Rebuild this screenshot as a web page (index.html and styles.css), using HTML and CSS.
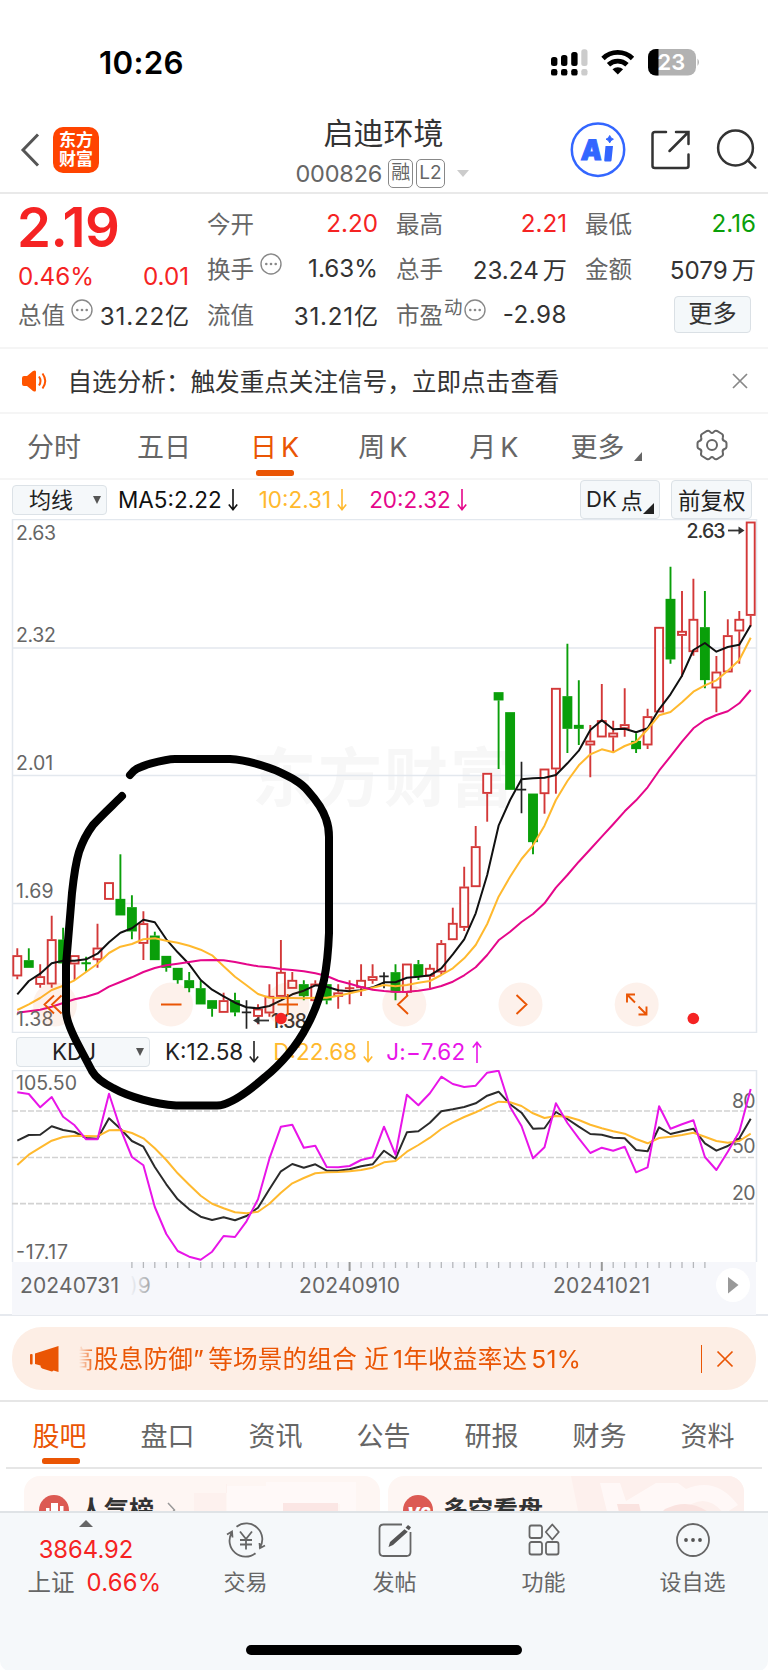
FILE: index.html
```html
<!DOCTYPE html>
<html lang="zh-CN">
<head>
<meta charset="utf-8">
<title>启迪环境 000826</title>
<link rel="stylesheet" href="styles.css">
</head>
<body>
<div class="phone">
  <div class="status">
    <span class="clock">10:26</span>
    <svg class="status-icons" width="152" height="30" viewBox="550 47 152 30">
      <g fill="#000"><rect x="551" y="57" width="6.4" height="9" rx="2.5"/><rect x="561" y="55" width="6.4" height="11" rx="2.5"/><rect x="571.2" y="52" width="6.4" height="14" rx="2.5"/><rect x="551" y="69" width="6.4" height="6.6" rx="2.2"/><rect x="561" y="69" width="6.4" height="6.6" rx="2.2"/><rect x="571.2" y="69" width="6.4" height="6.6" rx="2.2"/></g>
      <g fill="#ccc"><rect x="581.3" y="49.3" width="6.2" height="16.7" rx="2.5"/><rect x="581.3" y="69" width="6.2" height="6.6" rx="2.2"/></g>
      <path d="M603 58.500a21 21 0 0 1 29.500 0M608.500 64.700a13.500 13.500 0 0 1 18.500 0" fill="none" stroke="#000" stroke-width="4.800"/>
      <path d="M612.500 69.300a8 8 0 0 1 10.600 0l-5.300 5.300z"/>
      <rect x="648" y="49" width="48" height="26.500" rx="8" fill="#b2b2b2"/>
      <path d="M658.500 49v26.500H656a8 8 0 0 1-8-8V57a8 8 0 0 1 8-8z"/>
      <path d="M697.500 58.500q3 3.500 0 7.500z" fill="#b2b2b2"/>
      <text x="657.500" y="70.200" class="battery">23</text>
    </svg>
  </div>

  <header class="header">
    <div class="head-left">
      <svg width="22" height="36" viewBox="0 0 22 36"><path d="M19 2.500L4 18l15 15.500" fill="none" stroke="#555" stroke-width="3"/></svg>
      <div class="logo"><span>东方</span><span>财富</span></div>
    </div>
    <div class="head-title">
      <h1>启迪环境</h1>
      <div class="code"><span class="num">000826</span><span class="tag">融</span><span class="tag l2">L2</span><i class="caret"></i></div>
    </div>
    <div class="head-right">
      <svg width="56" height="56" viewBox="570 122 56 56"><circle cx="598" cy="149.700" r="26.200" fill="#fff" stroke="#3366ff" stroke-width="2.500"/><text x="0" y="0" transform="translate(580.500 160) skewX(-4)" class="ai" textLength="21" lengthAdjust="spacingAndGlyphs">A</text><path d="M605.500 146h7.500l-1.500 14.500q-.1 1-1.200 1h-5q-1.200 0-1.100-1.200z" fill="#3366ff"/><path d="M609.700 135.500q.8 2.900 3.700 3.700-2.900.8-3.700 3.700-.8-2.900-3.700-3.700 2.900-.8 3.700-3.700z" fill="#3366ff" stroke="#3366ff"/></svg>
      <svg width="42" height="42" viewBox="650 129 42 42" fill="none" stroke="#333" stroke-width="2.500" stroke-linecap="round"><path d="M666 132h-11q-2.500 0-2.500 2.500v31.500q0 2 2.500 2h31q2.500 0 2.500-2v-11.500M676 132H688.500v12M688 132.500L669.500 151"/></svg>
      <svg width="41" height="42" viewBox="716 129 41 42" fill="none" stroke="#333" stroke-width="2.500" stroke-linecap="round"><circle cx="735.500" cy="148" r="17.400"/><path d="M748 160.500l7.300 7.200"/></svg>
    </div>
  </header>

  <section class="quote">
    <div class="col first">
      <div class="price red">2.19</div>
      <div class="pair change red"><span>0.46%</span><span>0.01</span></div>
      <div class="pair"><span class="lab">总值<svg class="dots" viewBox="0 0 24 24"><use href="#more"/></svg></span><span class="wide">31.22亿</span></div>
    </div>
    <div class="col">
      <div class="pair top"><span class="lab">今开</span><span class="red">2.20</span></div>
      <div class="pair"><span class="lab">换手<svg class="dots" viewBox="0 0 24 24"><use href="#more"/></svg></span><span>1.63%</span></div>
      <div class="pair"><span class="lab">流值</span><span class="wide">31.21亿</span></div>
    </div>
    <div class="col">
      <div class="pair top"><span class="lab">最高</span><span class="red">2.21</span></div>
      <div class="pair"><span class="lab">总手</span><span>23.24<b class="thin"></b>万</span></div>
      <div class="pair"><span class="lab">市盈<small>动</small><svg class="dots tight" viewBox="0 0 24 24"><use href="#more"/></svg></span><span class="neg">-2.98</span></div>
    </div>
    <div class="col">
      <div class="pair top"><span class="lab">最低</span><span class="green">2.16</span></div>
      <div class="pair"><span class="lab">金额</span><span>5079<b class="thin"></b>万</span></div>
      <div class="pair end"><span class="more-btn">更多</span></div>
    </div>
  </section>
  <svg class="defs" width="0" height="0"><symbol id="more" viewBox="0 0 24 24"><circle cx="12" cy="12" r="10" fill="none" stroke="#888" stroke-width="1.400"/><g fill="#888"><circle cx="7.300" cy="12" r="1.300"/><circle cx="12" cy="12" r="1.300"/><circle cx="16.700" cy="12" r="1.300"/></g></symbol></svg>

  <div class="notice">
    <svg width="26" height="22" viewBox="0 0 26 22"><path d="M0 8q0-2 2-2h3l6-5q3-1.500 3 1v18q0 2.500-3 1L5 16H2q-2 0-2-2z" fill="#ff5500"/><path d="M17 6.500q3 4.500 0 9M20.500 3.500q5.500 7.500 0 15" fill="none" stroke="#ff5500" stroke-width="2"/></svg>
    <span>自选分析：触发重点关注信号，立即点击查看</span>
    <svg width="16" height="16" viewBox="0 0 16 16"><path d="M1 1l14 14M15 1L1 15" stroke="#888" stroke-width="1.700"/></svg>
  </div>

  <nav class="periods">
    <span>分时</span><span>五日</span><span class="on">日<b class="thin"></b>K</span><span>周<b class="thin"></b>K</span><span>月<b class="thin"></b>K</span><span class="more-tab">更多<i class="corner"></i></span>
    <svg width="34" height="34" viewBox="-17 -17 34 34" fill="none" stroke="#666" stroke-width="2"><path d="M-5-14Q-3-15-1.500-12.800Q0-11 1.500-12.800Q3-15 5-14L10-11Q11.500-10 10.800-7.500Q10-5 12.500-4Q14.500-3.500 14.500-1.500V1.500Q14.500 3.500 12.500 4Q10 5 10.800 7.500Q11.500 10 10 11L5 14Q3 15 1.500 12.800Q0 11-1.500 12.800Q-3 15-5 14L-10 11Q-11.500 10-10.800 7.500Q-10 5-12.500 4Q-14.500 3.500-14.500 1.500V-1.500Q-14.500-3.500-12.500-4Q-10-5-10.800-7.500Q-11.500-10-10-11Z"/><circle r="5"/></svg>
  </nav>

  <div class="charts">
    <div class="ma-row">
      <span class="box avg">均线<i class="down"></i></span>
      <span class="val ma5">MA5:2.22<svg class="arr" viewBox="0 0 10 22"><use href="#dn"/></svg></span>
      <span class="val ma10">10:2.31<svg class="arr" viewBox="0 0 10 22"><use href="#dn"/></svg></span>
      <span class="val ma20">20:2.32<svg class="arr" viewBox="0 0 10 22"><use href="#dn"/></svg></span>
      <span class="box dk">DK<b class="thin"></b>点<i class="corner dark"></i></span>
      <span class="box adj">前复权</span>
    </div>
    <svg class="defs" width="0" height="0"><symbol id="dn" viewBox="0 0 10 22"><path d="M5 0v20.500M.8 15.500L5 20.700l4.200-5.200" fill="none" stroke="currentColor" stroke-width="1.600"/></symbol></svg>

    <svg class="kline" width="768" height="514" viewBox="0 519 768 514">
      <text class="watermark" x="252" y="801" textLength="262">东方财富</text>
      <path class="grid" d="M12.500 519.500H756.500V1032.500H12.500ZM12 648H756M12 775.500H756M12 903.500H756"/>
      <g id="candles"></g>
      <g id="averages"></g>
      <g class="axis"><text x="16" y="540" textLength="40">2.63</text><text x="16" y="641.500" textLength="40">2.32</text><text x="16" y="769.500">2.01</text><text x="16" y="897.500" textLength="37.500">1.69</text><text x="16" y="1025.500" textLength="37.500">1.38</text></g>
      <text class="mark" x="686.500" y="537.500" textLength="39">2.63</text>
      <path d="M728 530.500h12" stroke="#333" stroke-width="1.800"/><path d="M738.500 526.500l6 4-6 4z" fill="#333"/>
      <text class="mark" x="271" y="1027.500" textLength="36">1.38</text>
      <path d="M269 1020.500h-12" stroke="#333" stroke-width="1.800"/><path d="M259.500 1016.500l-6.500 4 6.500 4z" fill="#333"/>
      <g class="buttons"><circle cx="55" cy="1004.500" r="22"/><circle cx="171" cy="1004.500" r="22"/><circle cx="287.500" cy="1004.500" r="22"/><circle cx="404.300" cy="1004.500" r="22"/><circle cx="520.500" cy="1004.500" r="22"/><circle cx="636.700" cy="1004.500" r="22"/></g>
      <path class="glyphs" d="M54 995.500l-9.500 9 9.500 9M61.500 995.500l-9.500 9 9.500 9M161 1004.500h20.500M277.500 1004.500h20.500M287.700 994v21M408 995l-10 9.500 10 9.500M516.500 995l10 9.500-10 9.500M627 1002.500v-8h8M627 994.500l8 8M646.500 1006.500v8h-8M646.500 1014.500l-8-8"/>
      <circle cx="281" cy="1018.500" r="5.800" fill="#f52323"/><circle cx="693.300" cy="1018.500" r="5.800" fill="#f52323"/>
    </svg>

    <div class="kdj-row">
      <span class="box kdj">KDJ<i class="down"></i></span>
      <span class="val k">K:12.58<svg class="arr" viewBox="0 0 10 22"><use href="#dn"/></svg></span>
      <span class="val d">D:22.68<svg class="arr" viewBox="0 0 10 22"><use href="#dn"/></svg></span>
      <span class="val j">J:−7.62<svg class="arr flip" viewBox="0 0 10 22"><use href="#dn"/></svg></span>
    </div>

    <svg class="osc" width="768" height="246" viewBox="0 1070 768 246">
      <defs><linearGradient id="fade"><stop offset="0" stop-color="#777" stop-opacity="0"/><stop offset="1" stop-color="#777" stop-opacity=".65"/></linearGradient></defs>
      <path class="grid" d="M12.500 1262V1070.500H756.500V1262"/>
      <path class="dash" d="M12 1111H756M12 1157.500H756M12 1203.700H756"/>
      <rect x="12" y="1262" width="744" height="53" fill="#f6f7fb"/>
      <g id="ticks"></g>
      <g class="axis"><text x="16" y="1089.500" textLength="61">105.50</text><text x="16" y="1258.500" textLength="52">-17.17</text><text x="732" y="1107.500" textLength="23.500">80</text><text x="732" y="1153" textLength="23.500">50</text><text x="732" y="1199.500" textLength="23.500">20</text></g>
      <g id="kdj"></g>
      <g class="dates"><text x="20" y="1292.500" textLength="99">20240731</text><text x="130" y="1292.500" fill="url(#fade)">)9</text><text x="299" y="1292.500" textLength="101">20240910</text><text x="553" y="1292.500" textLength="97">20241021</text></g>
      <circle cx="733" cy="1285" r="17" fill="#fff"/><path d="M728 1277l10.500 8-10.500 8.500z" fill="#999"/>
    </svg>

    <svg class="scribble" width="290" height="366" viewBox="54 749 290 366"><path d="M130 775C135 768 141 767 149 764C160 761 167 759 175 759L230 759C246 760 262 765 275 770C290 777 301 782 308 791C317 801 323 810 326 819Q329 827 329 837V933Q328 960 324 980Q318 1006 307 1026C297 1046 280 1065 265 1077C249 1091 231 1105 217 1105.500L176 1105.500C155 1104 129 1097 113 1088Q97 1080 92 1071L82 1052Q66 1023 66 1011V965L72 893Q75 865 79 852Q84 837 93 825C101 816 113 805 122 796"/></svg>
  </div>

  <div class="promo-wrap">
    <div class="promo">
      <svg width="32" height="26" viewBox="0 0 32 26" fill="#ea5504"><rect x="1" y="8" width="2.600" height="10.500" rx="1"/><path d="M6 7.500L29.500 0v26l-5-1.600q-1 1.500-3.300.7l-8-2.500q-2-.8-1.700-3L6 18z"/></svg>
      <span class="promo-text">高股息防御”<b class="thin"></b>等场景的组合 近<b class="thin"></b>1年收益率达<b class="thin"></b>51%</span>
      <i class="bar"></i>
      <svg width="18" height="18" viewBox="0 0 18 18"><path d="M1.500 1.500l15 15M16.500 1.500l-15 15" stroke="#ea5504" stroke-width="1.700"/></svg>
    </div>
  </div>

  <nav class="sections"><span class="on">股吧</span><span>盘口</span><span>资讯</span><span>公告</span><span>研报</span><span>财务</span><span>资料</span></nav>

  <div class="cards">
    <div class="card">
      <svg class="deco" width="356" height="60" viewBox="0 0 356 60"><path d="M170 60V17h33V8h-1v52z" fill="#fdf1ee"/><path d="M203 60V10h39v-4h90v54h-16V28h-57v32z" fill="#fff9f8"/><path d="M259 27h55v20h-55z" fill="#fbe6e4"/></svg>
      <svg class="badge" width="30" height="30" viewBox="0 0 30 30"><circle cx="15" cy="15" r="15" fill="#dc5a53"/><path d="M7 25V13h3.500v12zM12 25V8h7v17zM21 25V11h3.500v14z" fill="#fff"/></svg>
      <span>人气榜</span>
      <svg class="chev" width="9" height="16" viewBox="0 0 9 16"><path d="M1 1l6.500 7L1 15" fill="none" stroke="#999" stroke-width="1.500"/></svg>
    </div>
    <div class="card">
      <svg class="deco" width="356" height="60" viewBox="0 0 356 60"><path d="M183 0h173v60H195z" fill="#fdf0ed"/><path d="M212 7h20l6 18 30-18h22l8 6q30-13 52 16l-14 9q-20-26-45 0L250 60h-25z" fill="#fff8f7"/><path d="M229 28h22l6 25 20-20q30-15 55 14l-20 14h-75z" fill="#fae3e0"/></svg>
      <svg class="badge" width="30" height="30" viewBox="0 0 30 30"><circle cx="15" cy="15" r="15" fill="#dc5a53"/><text x="4" y="24" class="vs">VS</text></svg>
      <span>多空看盘</span>
    </div>
  </div>

  <footer class="bottom">
    <div class="tabs">
      <div class="index"><i class="tri"></i><span class="red">3864.92</span><div><span class="gray">上证</span><span class="red">0.66%</span></div></div>
      <div class="tab"><svg width="40" height="36" viewBox="-20 -18 40 36"><path d="M-9.500-13.200A16 16 0 0 1 13.500 8.500M9.500 13.200A16 16 0 0 1-14.500-7M-19-5.500l5-3 .5 6M19 5.500l-5 2.500-.5-5M-6-8.500l6 7.500 6-7.500M0-1v10.500M-6 0H6M-6 4.500H6"/></svg><span>交易</span></div>
      <div class="tab"><svg width="40" height="36" viewBox="-20 -18 40 36"><path d="M7-15.500H-11.500q-4 0-4 4v23.500q0 4 4 4h23q4 0 4-4V-8"/><path class="solid" d="M13-15l3 2.300-2 3-3.500-2.500zM9.500-10.700l3.300 2.500L-2 5-6.500 7-5 2z"/></svg><span>发帖</span></div>
      <div class="tab"><svg width="40" height="36" viewBox="-20 -18 40 36"><rect x="-14.500" y="-14.500" width="12.500" height="12.500" rx="2"/><rect x="-14.500" y="2" width="12.500" height="12.500" rx="2"/><rect x="2" y="2" width="12.500" height="12.500" rx="2"/><path d="M8.300-15.500l6.500 7.500-6.500 7.500-6.500-7.500z" stroke-linejoin="round"/></svg><span>功能</span></div>
      <div class="tab"><svg width="40" height="36" viewBox="-20 -18 40 36"><circle r="16"/><g class="solid"><circle cx="-7" r="1.900"/><circle r="1.900"/><circle cx="7" r="1.900"/></g></svg><span>设自选</span></div>
    </div>
    <div class="home"></div>
  </footer>
</div>
<script src="chart.js"></script>
</body>
</html>
```
FILE: styles.css
```css
* { box-sizing: border-box; }
body { margin: 0; background: #fff; font-family: Inter, "Noto Sans CJK SC", sans-serif; color: #333; }
.phone { width: 768px; height: 1670px; overflow: hidden; display: flex; flex-direction: column; }
.phone > * { flex: none; }
svg { display: block; flex: none; }
.defs { position: absolute; }
.red { color: #f52323; }
.green { color: #0a9f0a; }
.thin { display: inline-block; width: 4px; }

.status { height: 107px; display: flex; align-items: flex-start; justify-content: space-between; padding: 43px 66px 0 99px; }
.clock { font-size: 31.300px; line-height: 40px; font-weight: 600; color: #000; letter-spacing: .3px; }
.status-icons { margin-top: 4px; }
.battery { font: 600 22px Inter, sans-serif; fill: #fff; }

.header { height: 87px; border-bottom: 2px solid #e9e9e9; display: grid; grid-template-columns: 1fr auto 1fr; }
.head-left { display: flex; align-items: center; gap: 12px; padding: 0 0 0 19px; }
.logo { width: 46px; height: 46px; border-radius: 10px; background: #ff4400; color: #fff; display: flex; flex-direction: column; align-items: center; justify-content: center; font-weight: 700; font-size: 17px; line-height: 19px; }
.head-title { display: flex; flex-direction: column; align-items: center; margin-left: -4px; }
h1 { margin: 7px 0 0 3px; font-weight: 400; font-size: 30px; line-height: 39px; }
.code { display: flex; align-items: center; height: 30px; margin-top: 5px; font-size: 23.500px; color: #666; }
.code .num { letter-spacing: -.2px; margin-right: 6px; }
.tag { height: 29px; border: 1.500px solid #888; border-radius: 5px; font-size: 19px; line-height: 26px; padding: 0 2px; margin-right: 3px; }
.caret { border: 6.500px solid transparent; border-top: 7px solid #ccc; border-bottom: 0; margin-left: 9px; }
.head-right { display: flex; align-items: center; justify-content: flex-end; gap: 24px; padding: 0 11px 0 0; }
.ai { font: 900 28px Inter, sans-serif; fill: #3366ff; stroke: #3366ff; stroke-width: 1; }

.quote { height: 153px; display: grid; grid-template-columns: repeat(4, 171px); column-gap: 18px; padding: 5px 12px 0 18px; font-size: 24.200px; }
.pair { height: 46px; display: flex; align-items: center; justify-content: space-between; white-space: nowrap; }
.pair.top { padding-top: 2px; }
.price { height: 60px; line-height: 56px; font-size: 54.500px; font-weight: 600; letter-spacing: -.5px; margin: 0 0 2px -1px; }
.pair.change { height: 30px; margin-top: 2px; }
.wide { letter-spacing: .8px; margin-right: -1px; }
.neg { letter-spacing: .5px; }
.lab { color: #666; display: flex; align-items: center; font-size: 23.500px; }
.lab small { font-size: 18.500px; margin: -16px -1px 0 1px; }
.dots { width: 24px; height: 24px; margin: -9px 0 0 5px; }
.dots.tight { margin-left: 1px; }
.end { justify-content: flex-end; padding-right: 5px; }
.more-btn { width: 77px; height: 37px; background: #f4f8fa; border: 1.500px solid #dae0e5; border-radius: 4px; text-align: center; line-height: 34px; }

.notice { height: 67px; border-top: 2px solid #f5f5f5; border-bottom: 2px solid #f5f5f5; display: flex; align-items: center; padding: 0 20px 0 22px; font-size: 24.600px; }
.notice span { flex: 1; margin-left: 19.500px; padding-bottom: 2px; }

.periods { height: 66px; border-bottom: 2px solid #f5f5f5; display: flex; align-items: center; font-size: 27px; color: #666; padding: 0 0 2px 27px; }
.periods span { position: relative; margin-right: 56px; white-space: nowrap; }
.periods span:nth-child(2) { margin-right: 59px; }
.periods span:nth-child(3) { margin-right: 59px; }
.periods span:nth-child(4) { margin-right: 62px; }
.periods span:nth-child(5) { margin-right: 52px; }
.periods .more-tab { margin-right: 71px; }
.on { color: #ea5504; }
.on::after { content: ""; position: absolute; left: 50%; margin-left: -19px; bottom: -11px; width: 38px; height: 6px; border-radius: 2.500px; background: #ea5504; }
.corner { position: absolute; right: -18px; bottom: 4px; border-left: 8px solid transparent; border-bottom: 9px solid #666; }

.charts { position: relative; height: 836px; border-bottom: 2px solid #e6e9ee; }
.ma-row, .kdj-row { display: flex; align-items: center; font-size: 22.500px; color: #222; }
.ma-row { height: 39px; padding: 0 16px 0 12px; }
.kdj-row { height: 37px; padding-left: 16px; font-size: 22.500px; }
.box { position: relative; display: flex; align-items: center; background: #f5f8fa; border: 1.500px solid #dce2e7; border-radius: 4px; }
.avg { width: 95px; height: 30px; padding: 0 0 3px 16px; font-size: 22px; }
.down { position: absolute; right: 5px; top: 10px; border: 4.500px solid transparent; border-top: 8px solid #555; border-bottom: 0; }
.dk { width: 80px; height: 39px; padding: 0 0 2px 5px; margin-left: auto; font-size: 22px; }
.adj { width: 81px; height: 39px; padding: 0 0 2px 6px; margin-left: 11px; font-size: 22.500px; white-space: nowrap; }
.corner.dark { right: 5px; bottom: 4px; border-left: 11px solid transparent; border-bottom: 11px solid #222; }
.kdj { width: 134px; height: 30px; padding-left: 35px; }
.kdj .down { right: 5px; }
.val { display: flex; align-items: center; white-space: nowrap; }
.arr { width: 10px; height: 22px; margin-left: 6px; }
.arr.flip { transform: rotate(180deg); }
.ma5 { margin-left: 11px; color: #111; }
.ma10 { margin-left: 21px; color: #ffb92e; }
.ma20 { margin-left: 22px; color: #e5078a; }
.k { margin-left: 15px; }
.d { margin-left: 14px; color: #ffb92e; }
.j { margin-left: 13px; color: #e815e8; letter-spacing: .3px; }

.grid { fill: none; stroke: #e3e8ee; stroke-width: 1.500; }
.dash { fill: none; stroke: #d2d2d2; stroke-width: 1.700; stroke-dasharray: 6 2; }
.axis { font-size: 19.500px; fill: #666; }
.mark { font-size: 19.500px; font-weight: 500; fill: #333; }
.dates { font-size: 21px; fill: #666; }
.watermark { font: 700 64px "Noto Sans CJK SC", sans-serif; fill: #f7f7f7; }
.buttons { fill: #ee6020; fill-opacity: .09; }
.glyphs { fill: none; stroke: #ea5504; stroke-width: 1.900; }
.line { fill: none; stroke-width: 2; stroke-linejoin: round; }
.rise { stroke: #d33838; fill: #fff; stroke-width: 1.900; }
.fall { stroke: #0a9f0a; fill: #0a9f0a; stroke-width: 1.900; }
.flat { stroke: #222; fill: none; stroke-width: 1.700; }
.tick { stroke: #b5b7bb; stroke-width: 1.300; }
.tick.major { stroke: #999; stroke-width: 2; }
.scribble { position: absolute; left: 54px; top: 269px; fill: none; stroke: #000; stroke-width: 8; stroke-linecap: round; stroke-linejoin: round; }

.promo-wrap { height: 86px; padding: 11px 12px 0; border-bottom: 2px solid #e6e6e6; }
.promo { height: 63px; border-radius: 30px; background: #fdeee5; display: flex; align-items: center; padding: 0 22px 0 17px; color: #ea5504; }
.promo-text { flex: 1; height: 40px; line-height: 41px; font-size: 24.600px; letter-spacing: .22px; margin-left: 18px; text-indent: -10px; overflow: hidden; white-space: nowrap; -webkit-mask-image: linear-gradient(90deg, transparent 0, #000 16px); mask-image: linear-gradient(90deg, transparent 0, #000 16px); }
.bar { width: 1.500px; height: 28px; background: #ea5504; margin-right: 14px; }

.sections { height: 67px; margin: 0 6px; border-bottom: 2px solid #e6e6e6; display: grid; grid-template-columns: repeat(7, 108px); font-size: 27px; color: #666; }
.sections span { position: relative; left: -.5px; line-height: 70px; text-align: center; }
.sections .on { color: #ea5504; }
.sections .on::after { bottom: 8px; margin-left: -18px; }

.cards { height: 42px; display: grid; grid-template-columns: 356px 356px; gap: 8px; padding: 7px 24px 0; overflow: hidden; }
.card { position: relative; height: 70px; border-radius: 16px 16px 0 0; background: #fef6f3; overflow: hidden; display: flex; align-items: flex-start; padding: 19px 0 0 15px; font-size: 25px; line-height: 31px; font-weight: 700; color: #333; }
.card span { position: relative; margin-left: 10px; }
.badge, .chev { position: relative; }
.chev { margin: 7px 0 0 13px; }
.deco { position: absolute; left: 0; top: 0; }
.vs { font: italic 900 16px Inter, sans-serif; fill: #fff; }

.bottom { height: 160px; border-top: 2px solid #dfe3e6; background: #f5f8fa; border-radius: 0 0 10px 10px; display: flex; flex-direction: column; justify-content: space-between; align-items: center; padding-bottom: 16px; }
.tabs { display: grid; grid-template-columns: 171px repeat(4, 149px); width: 768px; font-size: 22px; color: #666; }
.index { display: flex; flex-direction: column; align-items: center; padding: 7px 0 0 1px; font-size: 23.800px; line-height: 33px; }
.tri { border: 7px solid transparent; border-bottom: 7px solid #666; border-top: 0; margin-bottom: 6px; }
.index > div { display: flex; gap: 12px; padding-left: 17px; }
.index > div .red { letter-spacing: .3px; }
.gray { color: #666; font-size: 23.500px; }
.tab { display: flex; flex-direction: column; align-items: center; padding-top: 9px; line-height: 30px; }
.tab svg { fill: none; stroke: #666; stroke-width: 1.800; margin-bottom: 9px; }
.tab svg .solid { fill: #555; stroke: none; }
.home { width: 276px; height: 10px; border-radius: 5px; background: #000; }
```
FILE: chart.js
```js
const X0 = 17.3, STEP = 11.46;
const xAt = i => +(X0 + i * STEP).toFixed(1);

// kind, high, body top, body bottom, low
const candles = [
  ['r',948.3,955.3,976.3,979.3],['g',948.3,960.3,967.7,967.7],['r',964.3,976.3,984.7,987.7],['r',915.7,939.3,984.3,987.7],['g',927.7,939.7,963.3,971.7],
  ['r',955.3,955.3,964.3,980],['g',956.7,963.3,964.3,971.7],['r',923.7,947.7,960,967.7],['r',882.3,882.3,899.7,899.7],['g',854.3,899,915.3,915.3],
  ['g',895.3,907.3,931.3,939.3],['r',911.3,923.3,943.7,960],['g',931.7,935.7,960,960],['g',956,956,967.7,971.7],['g',968,968,980,983.7],
  ['g',972,980.3,988,992.3],['g',980.7,988.3,1004.3,1004.3],['g',1000.3,1000.3,1008.7,1016.7],['r',992.7,1000.3,1012.7,1012.7],['g',992.7,1000.3,1012.3,1016.3],
  ['k',1000.3,1012.3,1012.3,1028.7],['r',1004.3,1008.7,1016.7,1024.3],['r',984.3,996,1013.3,1016.7],['r',940,972,996.7,996.7],['r',972,980,988.7,988.7],
  ['g',980.3,984.3,996,1000.3],['r',980.3,983.7,1001,1001],['g',984.3,984.3,1000.3,1004.3],['r',984.3,992.5,996.7,1008.7],['r',980.3,988.3,989,1004.3],
  ['r',964.3,980,988,996],['r',964.3,976.3,980.7,983.7],['k',972.3,976.3,976.3,988.3],['g',964.3,972.3,992.3,1000.3],['r',963.7,963.7,992.7,996.3],
  ['g',960,964.3,976.3,980],['r',964.3,968,976.7,988.3],['r',940,943.3,972.3,974.7],['r',907.7,923,940,940],['r',866.7,886.7,927.7,931],
  ['r',826,846.3,887,887],['r',773,773,793.7,821.7],['g',692.3,692.3,700.3,769],['g',712.3,712.3,789.7,789.7],['k',761.7,789.7,789.7,813.3],
  ['g',793.7,793.7,842,854.3],['r',768.7,768.7,794,813.7],['r',688,688,769.3,793.7],['g',643.7,696.3,728.7,753],['g',680.3,725,728.7,745],
  ['r',725,740.7,745.3,777.3],['r',684,720.3,737.3,737.3],['r',720.7,732.7,737.3,753],['r',688.3,724.3,729,736.7],['g',733.3,741,749,753],
  ['r',708.7,716.3,745.3,749],['r',627,627,712.3,712.3],['g',566.7,599,659.3,663.7],['r',591,631,635.7,676.7],['r',578.7,619,652,655.7],
  ['g',591,627.3,680,688.3],['r',656,671.7,688.3,712.3],['r',619.3,635.3,672.3,672.3],['r',611,619,631.3,663.7],['r',521.7,521.7,615.7,626.3]
];

const averages = {
  '#111': [994.3,981,973.7,963.3,960.7,960.7,959.3,953.7,942.3,932.7,928.3,919.7,922.3,939.3,952.3,964.3,980,989.7,996.3,1002.7,1007.3,1008.3,1006,1000.3,994.3,990.7,985.3,986.7,990.3,991.3,990.3,987.3,982.3,982.3,977.7,976.7,975.3,968.3,954.3,939.3,913.3,875,825.7,800,779.3,778.3,777.7,775,763.3,750.7,730,720.3,729.3,728.7,732.3,728.3,709.3,694.3,675.7,650,643,651.7,647,644.7,625.3],
  '#ffb92e': [1010,1004.3,998,990,985.7,980.3,972,963.7,953,946.7,944,939.3,938.3,940.7,942.7,945.7,949.7,955.3,966.3,976.7,985.3,994,997.7,998,998,998.3,997.7,997.7,995.7,993.3,990.7,987.7,985,986.3,985,982.7,981,975,968.3,958.3,945,924,896.7,876.7,859,845.3,825.7,800,781,765.3,754.3,749.3,752.3,746,741.7,729.3,715.3,712,702.3,691.7,685.3,680.3,670.7,660,637.7],
  '#e5078a': [1012.7,1011.3,1009.7,1006.7,1003,999.3,996.7,993.3,986.7,982,977.3,972,968,965.3,963.7,962,960.3,960,960.3,962,964.3,966.3,967.3,969,970,971.3,973.3,976,980.7,983.7,987,989.7,991,992,991.7,990.7,989,986,981.7,975.3,967.3,955,940.3,931.7,922,914,903.3,887.7,875,861.7,849.3,836.7,824.3,811.3,800.3,787.3,770.7,756.3,741.7,728.3,720,715,711.3,703.3,690]
};

// thirds of a pixel below y = 1030
const kdj = {
  '#2b2b2b': [332,315,314,289,300,306,324,326,265,296,333,350,411,463,508,538,560,570,562,571,558,533,478,424,402,413,403,422,422,418,409,403,362,386,307,304,278,244,238,231,220,197,185,223,248,296,295,246,267,290,312,314,323,325,360,364,292,312,304,296,340,362,348,325,266],
  '#ffb92e': [405,374,353,332,321,317,318,319,301,300,309,325,355,390,430,464,497,521,535,547,550,545,521,488,460,444,430,427,426,424,420,413,397,393,365,345,323,297,277,261,247,230,215,217,228,250,264,258,260,270,284,295,304,311,327,340,324,320,315,308,320,333,338,333,311],
  '#e815e8': [187,192,232,201,260,286,328,328,191,296,381,406,531,612,663,680,689,665,618,621,574,508,386,290,284,353,347,411,412,408,390,382,290,374,194,226,190,140,162,171,167,128,122,231,288,385,352,220,279,325,369,353,362,350,427,412,229,296,283,271,381,420,365,305,177]
};

const classes = { r: 'rise', g: 'fall', k: 'flat' };
document.getElementById('candles').innerHTML = candles.map(([kind, high, top, bottom, low], i) => {
  const x = xAt(i), flat = bottom - top < 2;
  const wicks = flat ? `M${x} ${high}V${low}M${x - 4.7} ${top}h9.4` : `M${x} ${high}V${top}M${x} ${bottom}V${low}`;
  const body = flat ? '' : `<rect x="${(x - 4).toFixed(1)}" y="${top + .8}" width="8" height="${(bottom - top - 1.6).toFixed(1)}"/>`;
  return `<g class="${classes[kind]}"><path d="${wicks}"/>${body}</g>`;
}).join('');

const line = (values, color, toY) =>
  `<polyline class="line" stroke="${color}" points="${values.map((v, i) => xAt(i) + ',' + toY(v).toFixed(1)).join(' ')}"/>`;
const draw = (id, set, toY) => {
  document.getElementById(id).innerHTML = Object.entries(set).map(([color, values]) => line(values, color, toY)).join('');
};
draw('averages', averages, v => v);
draw('kdj', kdj, v => 1030 + v / 3);

let ticks = '';
for (let i = 10; i <= 60; i++) {
  const major = i === 29 || i === 51;
  ticks += `<path class="tick${major ? ' major' : ''}" d="M${xAt(i)} 1262v${major ? 9 : 6}"/>`;
}
document.getElementById('ticks').innerHTML = ticks;
```
